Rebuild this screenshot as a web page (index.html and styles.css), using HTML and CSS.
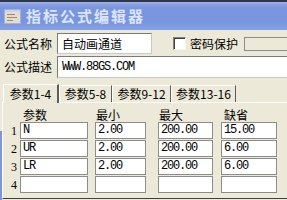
FILE: index.html
```html
<!DOCTYPE html>
<html>
<head>
<meta charset="utf-8">
<link rel="stylesheet" href="styles.css">
</head>
<body>
<div class="window">
  <div class="topstrip"></div>
  <div class="titlebar">
    <svg class="ticon" width="17" height="15" viewBox="0 0 17 15">
      <rect x="0.5" y="0.5" width="16" height="14" fill="#e6dccb" stroke="#9fb2dc"/>
      <rect x="1" y="1" width="15" height="2" fill="#c8d4ee"/>
      <rect x="3" y="5" width="8" height="1" fill="#a08c78"/>
      <rect x="3" y="8" width="10" height="1" fill="#a08c78"/>
      <rect x="3" y="11" width="6" height="1" fill="#a08c78"/>
    </svg>
    <span class="ttext">指标公式编辑器</span>
  </div>
  <div class="body">
    <div class="row r1">
      <span class="lbl">公式名称</span>
      <div class="inp name">自动画通道</div>
      <span class="chk"></span>
      <span class="chklbl">密码保护</span>
      <div class="pwd"></div>
    </div>
    <div class="row r2">
      <span class="lbl">公式描述</span>
      <div class="inp desc mono">WWW.88GS.COM</div>
    </div>
    <div class="tabs">
      <div class="tab sel">参数1-4</div>
      <div class="tab t2">参数5-8</div>
      <div class="tab t3">参数9-12</div>
      <div class="tab t4">参数13-16</div>
    </div>
    <div class="panel">
      <div class="grid">
        <span></span>
        <span class="hd h1">参数</span>
        <span class="hd h2">最小</span>
        <span class="hd h3">最大</span>
        <span class="hd h4">缺省</span>

        <span class="num">1</span>
        <div class="cell c1 mono">N</div>
        <div class="cell c2 mono">2.00</div>
        <div class="cell c3 mono">200.00</div>
        <div class="cell c4 mono">15.00</div>

        <span class="num">2</span>
        <div class="cell c1 mono">UR</div>
        <div class="cell c2 mono">2.00</div>
        <div class="cell c3 mono">200.00</div>
        <div class="cell c4 mono">6.00</div>

        <span class="num">3</span>
        <div class="cell c1 mono">LR</div>
        <div class="cell c2 mono">2.00</div>
        <div class="cell c3 mono">200.00</div>
        <div class="cell c4 mono">6.00</div>

        <span class="num">4</span>
        <div class="cell c1 mono"></div>
        <div class="cell c2 mono"></div>
        <div class="cell c3 mono"></div>
        <div class="cell c4 mono"></div>
      </div>
    </div>
  </div>
</div>
</body>
</html>
```

FILE: styles.css
```css
html, body {
  margin: 0;
  padding: 0;
  background: #ece9d8;
}
.window {
  width: 287px;
  height: 200px;
  overflow: hidden;
  font-family: "Noto Sans CJK SC", "Liberation Sans", sans-serif;
  font-size: 12px;
  color: #000;
  background: #ece9d8;
}
.topstrip {
  height: 2px;
  background: #303848;
}
.titlebar {
  height: 28px;
  background: linear-gradient(#a4b8ef 0px, #8aa3e6 2px, #7b96df 6px, #7a95de 20px, #86a2e6 28px);
  display: flex;
  align-items: center;
  padding-left: 4px;
}
.ticon {
  display: block;
  margin-top: 1px;
  flex-shrink: 0;
}
.ttext {
  margin-left: 5px;
  font-size: 15px;
  font-weight: bold;
  letter-spacing: 2px;
  color: #dbe5f8;
  line-height: 16px;
  white-space: nowrap;
}
.body {
  height: 170px;
  padding-left: 2px;
  background: linear-gradient(#7b96df, #7b96df) no-repeat 0 98px / 2px 100%, #ece9d8;
}
.row {
  display: flex;
  align-items: center;
  white-space: nowrap;
}
.row > * {
  flex-shrink: 0;
}
.r1 {
  margin-top: 3px;
  height: 21px;
}
.r2 {
  margin-top: 2px;
  height: 22px;
}
.lbl {
  width: 53px;
  padding-left: 2px;
  line-height: 14px;
}
.inp {
  box-sizing: border-box;
  height: 100%;
  background: #fff;
  border-top: 1px solid #7a7a7a;
  border-left: 1px solid #7a7a7a;
  border-right: 1px solid #c8c8c8;
  border-bottom: 1px solid #c8c8c8;
  padding-left: 4px;
  display: flex;
  align-items: center;
  white-space: nowrap;
}
.name {
  width: 95px;
}
.desc {
  width: 240px;
}
.mono {
  font-family: "Liberation Mono", "DejaVu Sans Mono", monospace;
  font-size: 12px;
  letter-spacing: -1.2px;
}
.chk {
  box-sizing: border-box;
  width: 13px;
  height: 13px;
  margin-left: 21px;
  background: #fff;
  border-top: 1px solid #808080;
  border-left: 1px solid #808080;
  border-right: 1px solid #f4f4f0;
  border-bottom: 1px solid #f4f4f0;
  box-shadow: inset 1px 1px 0 #404040;
}
.chklbl {
  margin-left: 4px;
  line-height: 14px;
}
.pwd {
  box-sizing: border-box;
  margin-left: 6px;
  width: 60px;
  height: 14px;
  border: 1px solid #8c8c8c;
  background: #ece9d8;
}
.tabs {
  display: flex;
  align-items: flex-end;
  height: 20px;
  margin-top: 4px;
  padding-left: 1px;
  position: relative;
  z-index: 2;
}
.tab {
  box-sizing: border-box;
  height: 17px;
  line-height: 15px;
  border-top: 1px solid #fff;
  border-left: 1px solid #fff;
  border-right: 1px solid #5c5c5c;
  text-align: center;
  background: #ece9d8;
  white-space: nowrap;
  flex-shrink: 0;
}
.tab.sel {
  height: 19px;
  width: 56px;
  line-height: 17px;
  border-right: 2px solid #5c5c5c;
  margin-bottom: -1px;
}
.t2 { width: 53px; }
.t3 { width: 59px; }
.t4 { width: 65px; }
.panel {
  box-sizing: border-box;
  height: 97px;
  width: 300px;
  border-top: 1px solid #fff;
  border-left: 1px solid #fff;
  border-bottom: 1px solid #404040;
  position: relative;
  z-index: 1;
}
.grid {
  display: grid;
  grid-template-columns: 17px 75px 63px 63px 56px;
  grid-template-rows: 19px repeat(4, 18px);
  align-items: start;
}
.hd {
  line-height: 14px;
  padding-top: 5px;
}
.h1 { padding-left: 3px; }
.h2 { padding-left: 1px; }
.h3 { padding-left: 1px; }
.h4 { padding-left: 3px; }
.num {
  font-family: "Liberation Serif", serif;
  font-size: 12px;
  text-align: right;
  padding-right: 3px;
  line-height: 18px;
}
.cell {
  box-sizing: border-box;
  height: 17px;
  background: #fff;
  border: 1px solid #8c8c8c;
  padding-left: 2px;
  line-height: 15px;
  white-space: nowrap;
}
.c1 { width: 68px; }
.c2 { width: 51px; }
.c3 { width: 55px; }
.c4 { width: 56px; }
```
